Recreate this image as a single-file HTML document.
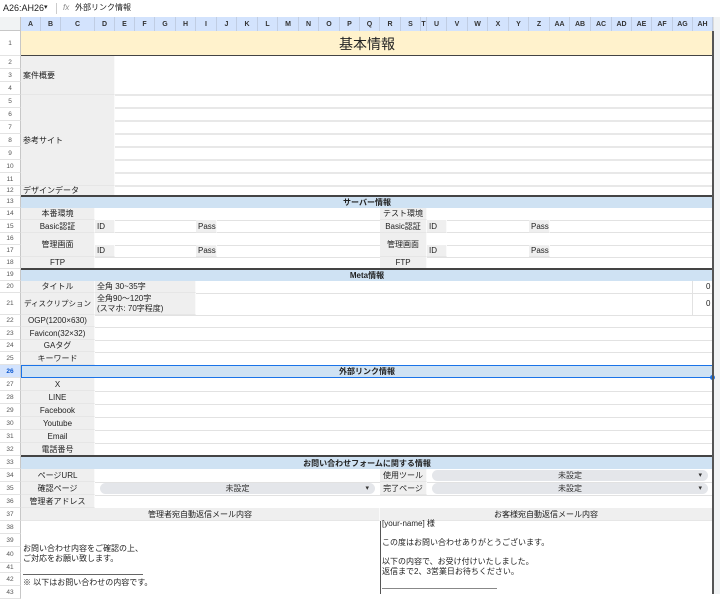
<!DOCTYPE html>
<html><head><meta charset="utf-8"><style>
*{margin:0;padding:0;box-sizing:border-box}
body{width:720px;height:594px;overflow:hidden;background:#fff;position:relative;font-family:"Liberation Sans","Noto Sans CJK JP",sans-serif;color:#222}
div{position:absolute}
.ch{top:17px;height:14px;font-size:7px;font-weight:bold;color:#333;display:flex;align-items:center;justify-content:center;border-right:1px solid #c0cde3;background:#d3e3fd}
.rn{left:0;width:21px;font-size:6.5px;color:#555;display:flex;align-items:center;justify-content:center;border-bottom:1px solid #e3e3e3;border-right:1px solid #c7c7c7;background:#fff}
.hl{height:1px;background:#e2e2e2}
.g{background:#efefef;font-size:8px;white-space:nowrap;display:flex;align-items:center;justify-content:center;border-bottom:1px solid #e6e6e6;border-right:1px solid #fafafa}
.gl{justify-content:flex-start;padding-left:2px}
.sec{background:#cfe2f3;font-size:8px;font-weight:bold;display:flex;align-items:center;justify-content:center}
.dk{background:#444;height:2px}
.dd{background:#e4e6ea;border-radius:7px;font-size:8px;display:flex;align-items:center;justify-content:center;color:#333}
.dd:after{content:"▾";position:absolute;right:6px;top:0;font-size:7px;line-height:11px}
.t{font-size:8px;white-space:nowrap;line-height:10px}
</style></head><body>
<div style="left:3px;top:3px;font-size:9px" class="t">A26:AH26</div>
<div style="left:44px;top:3px;font-size:7px" class="t">▾</div>
<div style="left:56px;top:3px;width:1px;height:11px;background:#ccc"></div>
<div style="left:63px;top:3px;font-size:8px;color:#888;font-style:italic" class="t">fx</div>
<div style="left:75px;top:3px;font-size:8px" class="t">外部リンク情報</div>
<div style="left:0;top:17px;width:21px;height:14px;background:#f1f3f4;border-right:1px solid #c7c7c7;border-bottom:1px solid #c7c7c7"></div>
<div class="ch" style="left:21px;width:20px">A</div><div class="ch" style="left:41px;width:20px">B</div><div class="ch" style="left:61px;width:34px">C</div><div class="ch" style="left:95px;width:20px">D</div><div class="ch" style="left:115px;width:20px">E</div><div class="ch" style="left:135px;width:20px">F</div><div class="ch" style="left:155px;width:21px">G</div><div class="ch" style="left:176px;width:20px">H</div><div class="ch" style="left:196px;width:21px">I</div><div class="ch" style="left:217px;width:20px">J</div><div class="ch" style="left:237px;width:21px">K</div><div class="ch" style="left:258px;width:20px">L</div><div class="ch" style="left:278px;width:21px">M</div><div class="ch" style="left:299px;width:20px">N</div><div class="ch" style="left:319px;width:21px">O</div><div class="ch" style="left:340px;width:20px">P</div><div class="ch" style="left:360px;width:20px">Q</div><div class="ch" style="left:380px;width:21px">R</div><div class="ch" style="left:401px;width:20px">S</div><div class="ch" style="left:421px;width:6px">T</div><div class="ch" style="left:427px;width:20px">U</div><div class="ch" style="left:447px;width:21px">V</div><div class="ch" style="left:468px;width:20px">W</div><div class="ch" style="left:488px;width:21px">X</div><div class="ch" style="left:509px;width:20px">Y</div><div class="ch" style="left:529px;width:21px">Z</div><div class="ch" style="left:550px;width:20px">AA</div><div class="ch" style="left:570px;width:21px">AB</div><div class="ch" style="left:591px;width:21px">AC</div><div class="ch" style="left:612px;width:20px">AD</div><div class="ch" style="left:632px;width:20px">AE</div><div class="ch" style="left:652px;width:21px">AF</div><div class="ch" style="left:673px;width:20px">AG</div><div class="ch" style="left:693px;width:20px">AH</div>
<div style="left:713px;top:17px;width:7px;height:577px;background:#f1f3f4;border-left:1px solid #ddd"></div>
<div style="left:0;top:31px;width:713px;height:1px;background:#c7c7c7"></div>
<div class="rn" style="top:31px;height:25px">1</div><div class="rn" style="top:56px;height:13px">2</div><div class="rn" style="top:69px;height:13px">3</div><div class="rn" style="top:82px;height:13px">4</div><div class="rn" style="top:95px;height:13px">5</div><div class="rn" style="top:108px;height:13px">6</div><div class="rn" style="top:121px;height:13px">7</div><div class="rn" style="top:134px;height:13px">8</div><div class="rn" style="top:147px;height:13px">9</div><div class="rn" style="top:160px;height:13px">10</div><div class="rn" style="top:173px;height:13px">11</div><div class="rn" style="top:186px;height:10px">12</div><div class="rn" style="top:196px;height:12px">13</div><div class="rn" style="top:208px;height:12px">14</div><div class="rn" style="top:220px;height:13px">15</div><div class="rn" style="top:233px;height:12px">16</div><div class="rn" style="top:245px;height:12px">17</div><div class="rn" style="top:257px;height:12px">18</div><div class="rn" style="top:269px;height:12px">19</div><div class="rn" style="top:281px;height:12px">20</div><div class="rn" style="top:293px;height:22px">21</div><div class="rn" style="top:315px;height:12px">22</div><div class="rn" style="top:327px;height:13px">23</div><div class="rn" style="top:340px;height:12px">24</div><div class="rn" style="top:352px;height:13px">25</div><div class="rn" style="top:365px;height:13px;background:#d3e3fd;color:#0b57d0;font-weight:bold">26</div><div class="rn" style="top:378px;height:13px">27</div><div class="rn" style="top:391px;height:13px">28</div><div class="rn" style="top:404px;height:13px">29</div><div class="rn" style="top:417px;height:13px">30</div><div class="rn" style="top:430px;height:13px">31</div><div class="rn" style="top:443px;height:13px">32</div><div class="rn" style="top:456px;height:13px">33</div><div class="rn" style="top:469px;height:13px">34</div><div class="rn" style="top:482px;height:13px">35</div><div class="rn" style="top:495px;height:13px">36</div><div class="rn" style="top:508px;height:13px">37</div><div class="rn" style="top:521px;height:13px">38</div><div class="rn" style="top:534px;height:13px">39</div><div class="rn" style="top:547px;height:16px">40</div><div class="rn" style="top:563px;height:10px">41</div><div class="rn" style="top:573px;height:13px">42</div><div class="rn" style="top:586px;height:13px">43</div>
<div style="left:21px;top:31px;width:692px;height:25px;background:#fff2cc;font-size:14px;display:flex;align-items:center;justify-content:center">基本情報</div>
<div class="dk" style="left:21px;top:55px;width:692px;height:1px"></div>
<div class="hl" style="left:115px;top:94px;width:598px;height:2px;background:#e8e8e8"></div>
<div class="hl" style="left:115px;top:107px;width:598px;height:2px;background:#e8e8e8"></div>
<div class="hl" style="left:115px;top:120px;width:598px;height:2px;background:#e8e8e8"></div>
<div class="hl" style="left:115px;top:133px;width:598px;height:2px;background:#e8e8e8"></div>
<div class="hl" style="left:115px;top:146px;width:598px;height:2px;background:#e8e8e8"></div>
<div class="hl" style="left:115px;top:159px;width:598px;height:2px;background:#e8e8e8"></div>
<div class="hl" style="left:115px;top:172px;width:598px;height:2px;background:#e8e8e8"></div>
<div class="hl" style="left:115px;top:185px;width:598px;height:2px;background:#e8e8e8"></div>
<div class="g gl" style="left:21px;top:56px;width:94px;height:39px">案件概要</div>
<div class="g gl" style="left:21px;top:95px;width:94px;height:91px">参考サイト</div>
<div class="g gl" style="left:21px;top:186px;width:94px;height:10px">デザインデータ</div>
<div class="dk" style="left:21px;top:195px;width:692px"></div>
<div class="sec" style="left:21px;top:197px;width:692px;height:11px">サーバー情報</div>
<div class="hl" style="left:95px;top:220px;width:618px"></div>
<div class="hl" style="left:95px;top:232px;width:618px"></div>
<div class="hl" style="left:95px;top:245px;width:618px"></div>
<div class="hl" style="left:95px;top:257px;width:618px"></div>
<div class="g" style="left:21px;top:208px;width:74px;height:12px">本番環境</div>
<div class="g" style="left:21px;top:220px;width:74px;height:13px">Basic認証</div>
<div class="g" style="left:21px;top:233px;width:74px;height:24px">管理画面</div>
<div class="g" style="left:21px;top:257px;width:74px;height:12px">FTP</div>
<div class="g gl" style="left:95px;top:220px;width:20px;height:13px">ID</div>
<div class="g gl" style="left:95px;top:245px;width:20px;height:12px">ID</div>
<div class="g gl" style="left:196px;top:220px;width:21px;height:13px">Pass</div>
<div class="g gl" style="left:196px;top:245px;width:21px;height:12px">Pass</div>
<div class="g" style="left:380px;top:208px;width:47px;height:12px">テスト環境</div>
<div class="g" style="left:380px;top:220px;width:47px;height:13px">Basic認証</div>
<div class="g" style="left:380px;top:233px;width:47px;height:24px">管理画面</div>
<div class="g" style="left:380px;top:257px;width:47px;height:12px">FTP</div>
<div class="g gl" style="left:427px;top:220px;width:20px;height:13px">ID</div>
<div class="g gl" style="left:427px;top:245px;width:20px;height:12px">ID</div>
<div class="g gl" style="left:529px;top:220px;width:21px;height:13px">Pass</div>
<div class="g gl" style="left:529px;top:245px;width:21px;height:12px">Pass</div>
<div class="dk" style="left:21px;top:268px;width:692px"></div>
<div class="sec" style="left:21px;top:270px;width:692px;height:11px">Meta情報</div>
<div class="hl" style="left:95px;top:293px;width:618px"></div>
<div class="hl" style="left:95px;top:315px;width:618px"></div>
<div class="hl" style="left:95px;top:327px;width:618px"></div>
<div class="hl" style="left:95px;top:340px;width:618px"></div>
<div class="hl" style="left:95px;top:352px;width:618px"></div>
<div class="g" style="left:21px;top:281px;width:74px;height:12px">タイトル</div>
<div class="g" style="left:21px;top:293px;width:74px;height:22px;font-size:7.5px">ディスクリプション</div>
<div class="g" style="left:21px;top:315px;width:74px;height:12px">OGP(1200×630)</div>
<div class="g" style="left:21px;top:327px;width:74px;height:13px">Favicon(32×32)</div>
<div class="g" style="left:21px;top:340px;width:74px;height:12px">GAタグ</div>
<div class="g" style="left:21px;top:352px;width:74px;height:13px">キーワード</div>
<div class="g gl" style="left:95px;top:281px;width:101px;height:12px">全角 30~35字</div>
<div class="g gl" style="left:95px;top:293px;width:101px;height:22px;line-height:10px;white-space:normal">全角90～120字<br>(スマホ: 70字程度)</div>
<div style="left:692px;top:281px;width:1px;height:34px;background:#e2e2e2"></div>
<div class="t" style="left:706px;top:282px">0</div>
<div class="t" style="left:706px;top:299px">0</div>
<div class="sec" style="left:21px;top:365px;width:692px;height:13px;border:1px solid #1a73e8">外部リンク情報</div>
<div style="left:710px;top:375px;width:5px;height:5px;background:#1a73e8;border-radius:3px"></div>
<div class="hl" style="left:95px;top:391px;width:618px"></div>
<div class="hl" style="left:95px;top:404px;width:618px"></div>
<div class="hl" style="left:95px;top:417px;width:618px"></div>
<div class="hl" style="left:95px;top:430px;width:618px"></div>
<div class="hl" style="left:95px;top:443px;width:618px"></div>
<div class="g" style="left:21px;top:378px;width:74px;height:13px">X</div>
<div class="g" style="left:21px;top:391px;width:74px;height:13px">LINE</div>
<div class="g" style="left:21px;top:404px;width:74px;height:13px">Facebook</div>
<div class="g" style="left:21px;top:417px;width:74px;height:13px">Youtube</div>
<div class="g" style="left:21px;top:430px;width:74px;height:13px">Email</div>
<div class="g" style="left:21px;top:443px;width:74px;height:13px">電話番号</div>
<div class="dk" style="left:21px;top:455px;width:692px"></div>
<div class="sec" style="left:21px;top:457px;width:692px;height:12px">お問い合わせフォームに関する情報</div>
<div class="hl" style="left:95px;top:482px;width:618px"></div>
<div class="hl" style="left:95px;top:495px;width:618px"></div>
<div class="hl" style="left:95px;top:508px;width:618px"></div>
<div class="g" style="left:21px;top:469px;width:74px;height:13px">ページURL</div>
<div class="g" style="left:21px;top:482px;width:74px;height:13px">確認ページ</div>
<div class="g" style="left:21px;top:495px;width:74px;height:13px">管理者アドレス</div>
<div class="g" style="left:380px;top:469px;width:47px;height:13px">使用ツール</div>
<div class="g" style="left:380px;top:482px;width:47px;height:13px">完了ページ</div>
<div class="dd" style="left:432px;top:470px;width:276px;height:11px">未設定</div>
<div class="dd" style="left:432px;top:483px;width:276px;height:11px">未設定</div>
<div class="dd" style="left:100px;top:483px;width:275px;height:11px">未設定</div>
<div class="g" style="left:21px;top:508px;width:359px;height:13px">管理者宛自動返信メール内容</div>
<div class="g" style="left:380px;top:508px;width:333px;height:13px">お客様宛自動返信メール内容</div>
<div style="left:380px;top:521px;width:1px;height:73px;background:#555"></div>
<div class="t" style="left:23px;top:544px">お問い合わせ内容をご確認の上、</div>
<div class="t" style="left:23px;top:554px">ご対応をお願い致します。</div>
<div style="left:23px;top:574px;width:120px;height:1px;background:#666"></div>
<div class="t" style="left:23px;top:578px">※ 以下はお問い合わせの内容です。</div>
<div class="t" style="left:382px;top:519px">[your-name] 様</div>
<div class="t" style="left:382px;top:538px">この度はお問い合わせありがとうございます。</div>
<div class="t" style="left:382px;top:557px">以下の内容で、お受け付けいたしました。</div>
<div class="t" style="left:382px;top:567px">返信まで2、3営業日お待ちください。</div>
<div style="left:382px;top:588px;width:115px;height:1px;background:#888"></div>
<div style="left:712px;top:31px;width:2px;height:563px;background:#555"></div>
</body></html>
